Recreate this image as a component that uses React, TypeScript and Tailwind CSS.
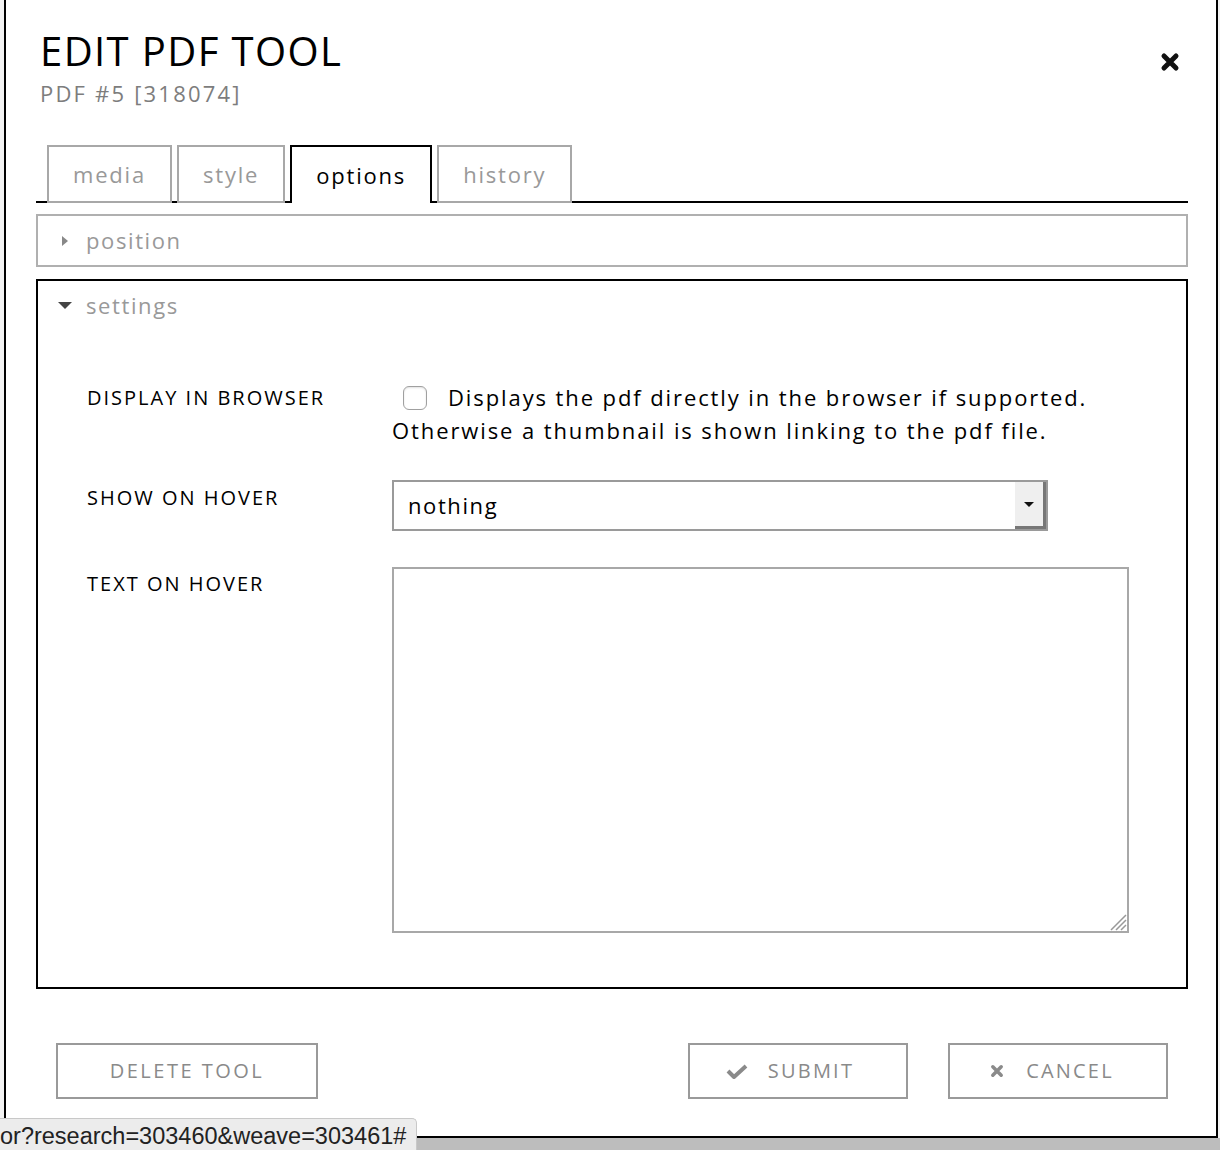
import { useState } from 'react';

const font = { fontFamily: '"Open Sans", "Liberation Sans", sans-serif' };

const tabs = ['media', 'style', 'options', 'history'];

const CloseIcon = ({ className, color }: { className?: string; color: string }) => (
  <svg viewBox="0 0 20 20" className={className}>
    <path d="M4 4 L16 16 M16 4 L4 16" stroke={color} strokeWidth="5" strokeLinecap="round" />
  </svg>
);

const CheckIcon = () => (
  <svg viewBox="0 0 22 16" className="w-[22px] h-[16px]">
    <path d="M2 8 L8 14 L20 3" stroke="#8a8a8a" strokeWidth="4" fill="none" strokeLinejoin="round" />
  </svg>
);

const App = () => {
  const [activeTab, setActiveTab] = useState('options');
  const [checked, setChecked] = useState(false);

  return (
    <div
      className="relative w-[1220px] h-[1150px] bg-[#f2f2f2] overflow-hidden"
      style={font}
    >
      {/* Modal */}
      <div className="ml-[4px] w-[1214px] h-[1138px] bg-white border-x-2 border-b-2 border-black flex flex-col">
        {/* Header */}
        <div className="flex items-start justify-between pl-[34px] pr-[34px] pt-[26px]">
          <div>
            <h1 className="text-[40px] leading-[50px] tracking-[1.4px] text-black">EDIT PDF TOOL</h1>
            <div className="text-[22px] leading-[30px] tracking-[2.2px] text-[#7d7d7d] mt-[2px]">
              PDF #5 [318074]
            </div>
          </div>
          <button className="mt-[26px] mr-[2px]">
            <CloseIcon className="w-[20px] h-[20px]" color="#111" />
          </button>
        </div>

        <div className="px-[30px] pr-[28px] mt-[37px]">
          {/* Tabs */}
          <div className="flex gap-[5px] pl-[11px] border-b-2 border-black">
            {tabs.map((t) => (
              <button
                key={t}
                onClick={() => setActiveTab(t)}
                className={`h-[58px] px-[24px] border-2 border-b-0 text-[22px] tracking-[1.8px] -mb-[2px] ${
                  activeTab === t
                    ? 'border-black text-black bg-white'
                    : 'border-[#a8a8a8] text-[#999] border-b-2 border-b-[#a8a8a8]'
                }`}
              >
                {t}
              </button>
            ))}
          </div>

          {/* Position */}
          <div className="mt-[11px] h-[53px] border-2 border-[#b0b0b0] flex items-center pl-[24px]">
            <span className="w-0 h-0 border-y-[5px] border-y-transparent border-l-[6px] border-l-[#888] mr-[18px]" />
            <span className="text-[22px] tracking-[1.6px] text-[#999]">position</span>
          </div>

          {/* Settings */}
          <div className="mt-[12px] h-[710px] border-2 border-black">
            <div className="flex items-center h-[48px] pl-[20px]">
              <span className="w-0 h-0 border-x-[7px] border-x-transparent border-t-[7px] border-t-[#444] mr-[14px]" />
              <span className="text-[22px] tracking-[1.6px] text-[#999]">settings</span>
            </div>

            <div className="pl-[49px] pt-[52px] flex flex-col">
              {/* Display in browser */}
              <div className="flex">
                <div className="w-[305px] text-[20px] tracking-[2px] text-black leading-[33px]">
                  DISPLAY IN BROWSER
                </div>
                <div className="text-[22px] tracking-[1.9px] leading-[33px] text-black">
                  <div className="flex items-center">
                    <button
                      onClick={() => setChecked(!checked)}
                      className="ml-[11px] mr-[21px] w-[24px] h-[24px] rounded-[6px] border border-[#a0a0a0] bg-white shadow-[inset_0_1px_2px_rgba(0,0,0,0.12)] flex items-center justify-center"
                    >
                      {checked && <span className="text-[14px]">✓</span>}
                    </button>
                    <span>Displays the pdf directly in the browser if supported.</span>
                  </div>
                  <div>Otherwise a thumbnail is shown linking to the pdf file.</div>
                </div>
              </div>

              {/* Show on hover */}
              <div className="flex mt-[33px]">
                <div className="w-[305px] text-[20px] tracking-[2px] text-black pt-[3px]">SHOW ON HOVER</div>
                <div className="w-[656px] h-[51px] border-2 border-[#9a9a9a] flex items-center justify-between">
                  <span className="pl-[14px] text-[22px] tracking-[1.6px] text-black">nothing</span>
                  <div className="h-full w-[31px] bg-[#efefef] border-r-[3px] border-b-[3px] border-r-[#777] border-b-[#777] flex items-center justify-center">
                    <span className="w-0 h-0 border-x-[5px] border-x-transparent border-t-[5px] border-t-[#111]" />
                  </div>
                </div>
              </div>

              {/* Text on hover */}
              <div className="flex mt-[36px]">
                <div className="w-[305px] text-[20px] tracking-[2px] text-black pt-[2px]">TEXT ON HOVER</div>
                <div className="relative w-[737px] h-[366px] border-2 border-[#a8a8a8] bg-white">
                  <svg viewBox="0 0 20 20" className="absolute right-0 bottom-0 w-[20px] h-[20px]">
                    <path d="M4 19 L19 4 M9 19 L19 9 M14 19 L19 14" stroke="#999" strokeWidth="1.5" />
                  </svg>
                </div>
              </div>
            </div>
          </div>
        </div>

        {/* Footer buttons */}
        <div className="flex items-center mt-[54px] pl-[50px] pr-[48px]">
          <button className="w-[262px] h-[56px] border-2 border-[#9a9a9a] text-[20px] tracking-[2.5px] text-[#8a8a8a]">
            DELETE TOOL
          </button>
          <div className="flex-1" />
          <button className="w-[220px] h-[56px] pr-[16px] border-2 border-[#9a9a9a] flex items-center justify-center gap-[20px] text-[20px] tracking-[2.2px] text-[#8a8a8a]">
            <CheckIcon />
            <span>SUBMIT</span>
          </button>
          <button className="ml-[40px] w-[220px] h-[56px] pr-[12px] border-2 border-[#9a9a9a] flex items-center justify-center gap-[22px] text-[20px] tracking-[2.2px] text-[#8a8a8a]">
            <CloseIcon className="w-[14px] h-[14px]" color="#8a8a8a" />
            <span>CANCEL</span>
          </button>
        </div>
      </div>

      {/* Backdrop strip below modal */}
      <div className="h-[12px] bg-[#bdbdbd]" />

      {/* Browser status bar overlay */}
      <div
        className="absolute left-0 bottom-0 w-[417px] h-[32px] pt-[4px] bg-[#ececec] border-t border-r border-[#c8c8c8] rounded-tr-[5px] flex items-center text-[23.5px] text-[#222] whitespace-nowrap overflow-hidden"
        style={{ fontFamily: '"Liberation Sans", Arial, sans-serif' }}
      >
        or?research=303460&amp;weave=303461#
      </div>
    </div>
  );
};

export default App;
